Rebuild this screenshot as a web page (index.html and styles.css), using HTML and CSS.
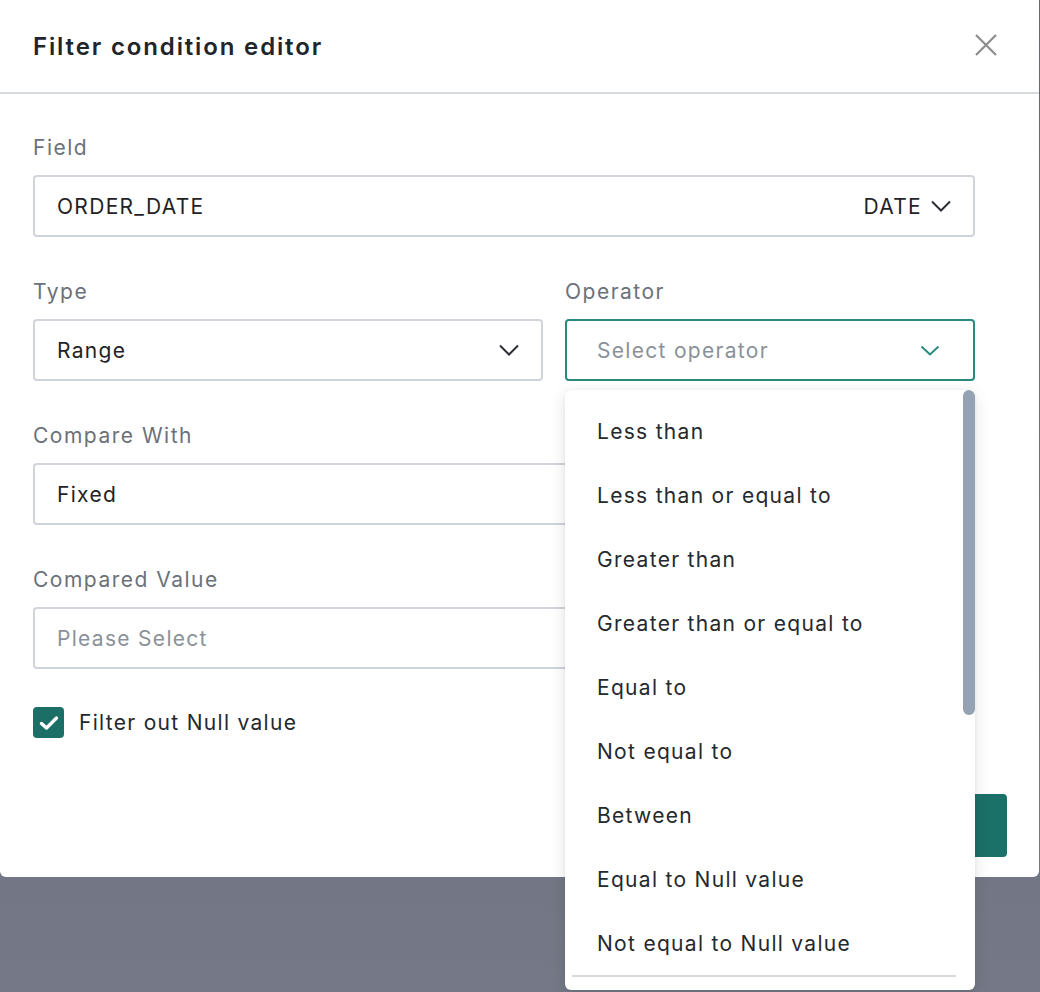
FILE: index.html
```html
<!DOCTYPE html>
<html lang="en">
<head>
  <meta charset="UTF-8">
  <title>Filter condition editor</title>
  <link rel="stylesheet" href="styles.css">
</head>
<body>
  <div class="modal">
    <div class="modal-header">
      <h1>Filter condition editor</h1>
      <button class="close-btn" aria-label="Close">
        <svg width="22" height="22" viewBox="0 0 22 22"><path d="M1 1L21 21M21 1L1 21" stroke="#8c8c8c" stroke-width="2.2" fill="none"/></svg>
      </button>
    </div>

    <div class="modal-body">
      <div class="group">
        <label class="label">Field</label>
        <div class="input">
          <span class="value">ORDER_DATE</span>
          <span class="suffix">DATE
            <svg width="20" height="12" viewBox="0 0 20 12"><path d="M1 1.5L10 10.5L19 1.5" stroke="#2b2f33" stroke-width="2" fill="none"/></svg>
          </span>
        </div>
      </div>

      <div class="row">
        <div class="group">
          <label class="label">Type</label>
          <div class="input">
            <span class="value">Range</span>
            <svg width="20" height="12" viewBox="0 0 20 12"><path d="M1 1.5L10 10.5L19 1.5" stroke="#2b2f33" stroke-width="2" fill="none"/></svg>
          </div>
        </div>
        <div class="group op-group">
          <label class="label">Operator</label>
          <div class="input focused">
            <span class="placeholder">Select operator</span>
            <svg width="20" height="11" viewBox="0 0 20 11"><path d="M1.5 1.5L10 9.5L18.5 1.5" stroke="#23897d" stroke-width="1.8" fill="none"/></svg>
          </div>

          <div class="dropdown">
            <ul class="options">
              <li>Less than</li>
              <li>Less than or equal to</li>
              <li>Greater than</li>
              <li>Greater than or equal to</li>
              <li>Equal to</li>
              <li>Not equal to</li>
              <li>Between</li>
              <li>Equal to Null value</li>
              <li>Not equal to Null value</li>
            </ul>
            <div class="divider"></div>
            <div class="scroll-thumb"></div>
          </div>
        </div>
      </div>

      <div class="group">
        <label class="label">Compare With</label>
        <div class="input">
          <span class="value">Fixed</span>
        </div>
      </div>

      <div class="group">
        <label class="label">Compared Value</label>
        <div class="input">
          <span class="placeholder">Please Select</span>
        </div>
      </div>

      <label class="check">
        <span class="box">
          <svg width="20" height="16" viewBox="0 0 20 16"><path d="M2.5 8.5L7.5 13L17.5 3" stroke="#fff" stroke-width="3.4" fill="none" stroke-linecap="round" stroke-linejoin="round"/></svg>
        </span>
        Filter out Null value
      </label>
    </div>

    <div class="modal-footer">
      <button class="btn">Cancel</button>
      <button class="btn primary">Confirm</button>
    </div>
  </div>
</body>
</html>
```

FILE: styles.css
```css
* {
  box-sizing: border-box;
}
body {
  margin: 0;
  height: 992px;
  overflow: hidden;
  font-family: Inter, 'Noto Sans', sans-serif;
  background: linear-gradient(#646874, #757987);
  color: #24292e;
}
.modal {
  width: 1039px;
  height: 877px;
  background: #fff;
  border-radius: 0 0 6px 6px;
  display: flex;
  flex-direction: column;
}
.modal-header {
  height: 94px;
  border-bottom: 2px solid #d6dadf;
  display: flex;
  align-items: center;
  justify-content: space-between;
  padding: 0 42px 0 33px;
}
.modal-header h1 {
  margin: 0;
  font-size: 24px;
  font-weight: 600;
  color: #212529;
  letter-spacing: 1.85px;
}
.close-btn {
  background: none;
  border: none;
  padding: 0;
  display: flex;
  cursor: pointer;
  margin-top: -2px;
}
.modal-body {
  padding: 41px 64px 0 33px;
  flex: 1;
}
.group {
  margin-bottom: 42px;
}
.label {
  display: block;
  font-size: 21px;
  line-height: 25px;
  color: #6b717a;
  margin-bottom: 15px;
  letter-spacing: 1.5px;
}
.input {
  height: 62px;
  border: 2px solid #cfd4da;
  border-radius: 4px;
  display: flex;
  align-items: center;
  justify-content: space-between;
  padding: 0 22px 0 22px;
  font-size: 21px;
  letter-spacing: 1.3px;
}
.input.focused {
  border-color: #2a8a7e;
  padding: 0 33px 0 30px;
}
.value {
  color: #1f2327;
}
.placeholder {
  color: #8b9198;
}
.suffix {
  display: flex;
  align-items: center;
  gap: 9px;
  color: #1f2327;
}
.row {
  display: grid;
  grid-template-columns: 510px 1fr;
  gap: 22px;
}
.op-group {
  position: relative;
}
.dropdown {
  position: absolute;
  top: 111px;
  left: 0;
  right: 0;
  z-index: 5;
  height: 600px;
  background: #fff;
  border-radius: 6px;
  box-shadow: 0 4px 16px rgba(0, 0, 0, 0.12), 0 0 3px rgba(0, 0, 0, 0.06);
  padding-top: 9px;
  overflow: hidden;
}
.options {
  list-style: none;
  margin: 0;
  padding: 0;
}
.options li {
  height: 64px;
  line-height: 65px;
  padding-left: 32px;
  font-size: 21px;
  letter-spacing: 1.3px;
  color: #24292e;
}
.divider {
  height: 2px;
  background: #d6dadf;
  margin: 0 19px 0 7px;
}
.scroll-thumb {
  position: absolute;
  top: 0;
  right: 0;
  width: 12px;
  height: 325px;
  border-radius: 6px;
  background: #94a2b4;
}
.check {
  display: flex;
  align-items: center;
  gap: 15px;
  font-size: 21px;
  letter-spacing: 1.3px;
  color: #24292e;
  margin-top: -4px;
}
.box {
  width: 31px;
  height: 31px;
  border-radius: 4px;
  background: #1b6f67;
  display: flex;
  align-items: center;
  justify-content: center;
}
.modal-footer {
  display: flex;
  justify-content: flex-end;
  gap: 16px;
  padding: 0 32px 20px;
}
.btn {
  height: 63px;
  padding: 0 32px;
  border-radius: 4px;
  border: 2px solid #cfd4da;
  background: #fff;
  font-family: inherit;
  font-size: 20px;
  color: #24292e;
}
.btn.primary {
  background: #1b7068;
  border-color: #1b7068;
  color: #fff;
}
```
